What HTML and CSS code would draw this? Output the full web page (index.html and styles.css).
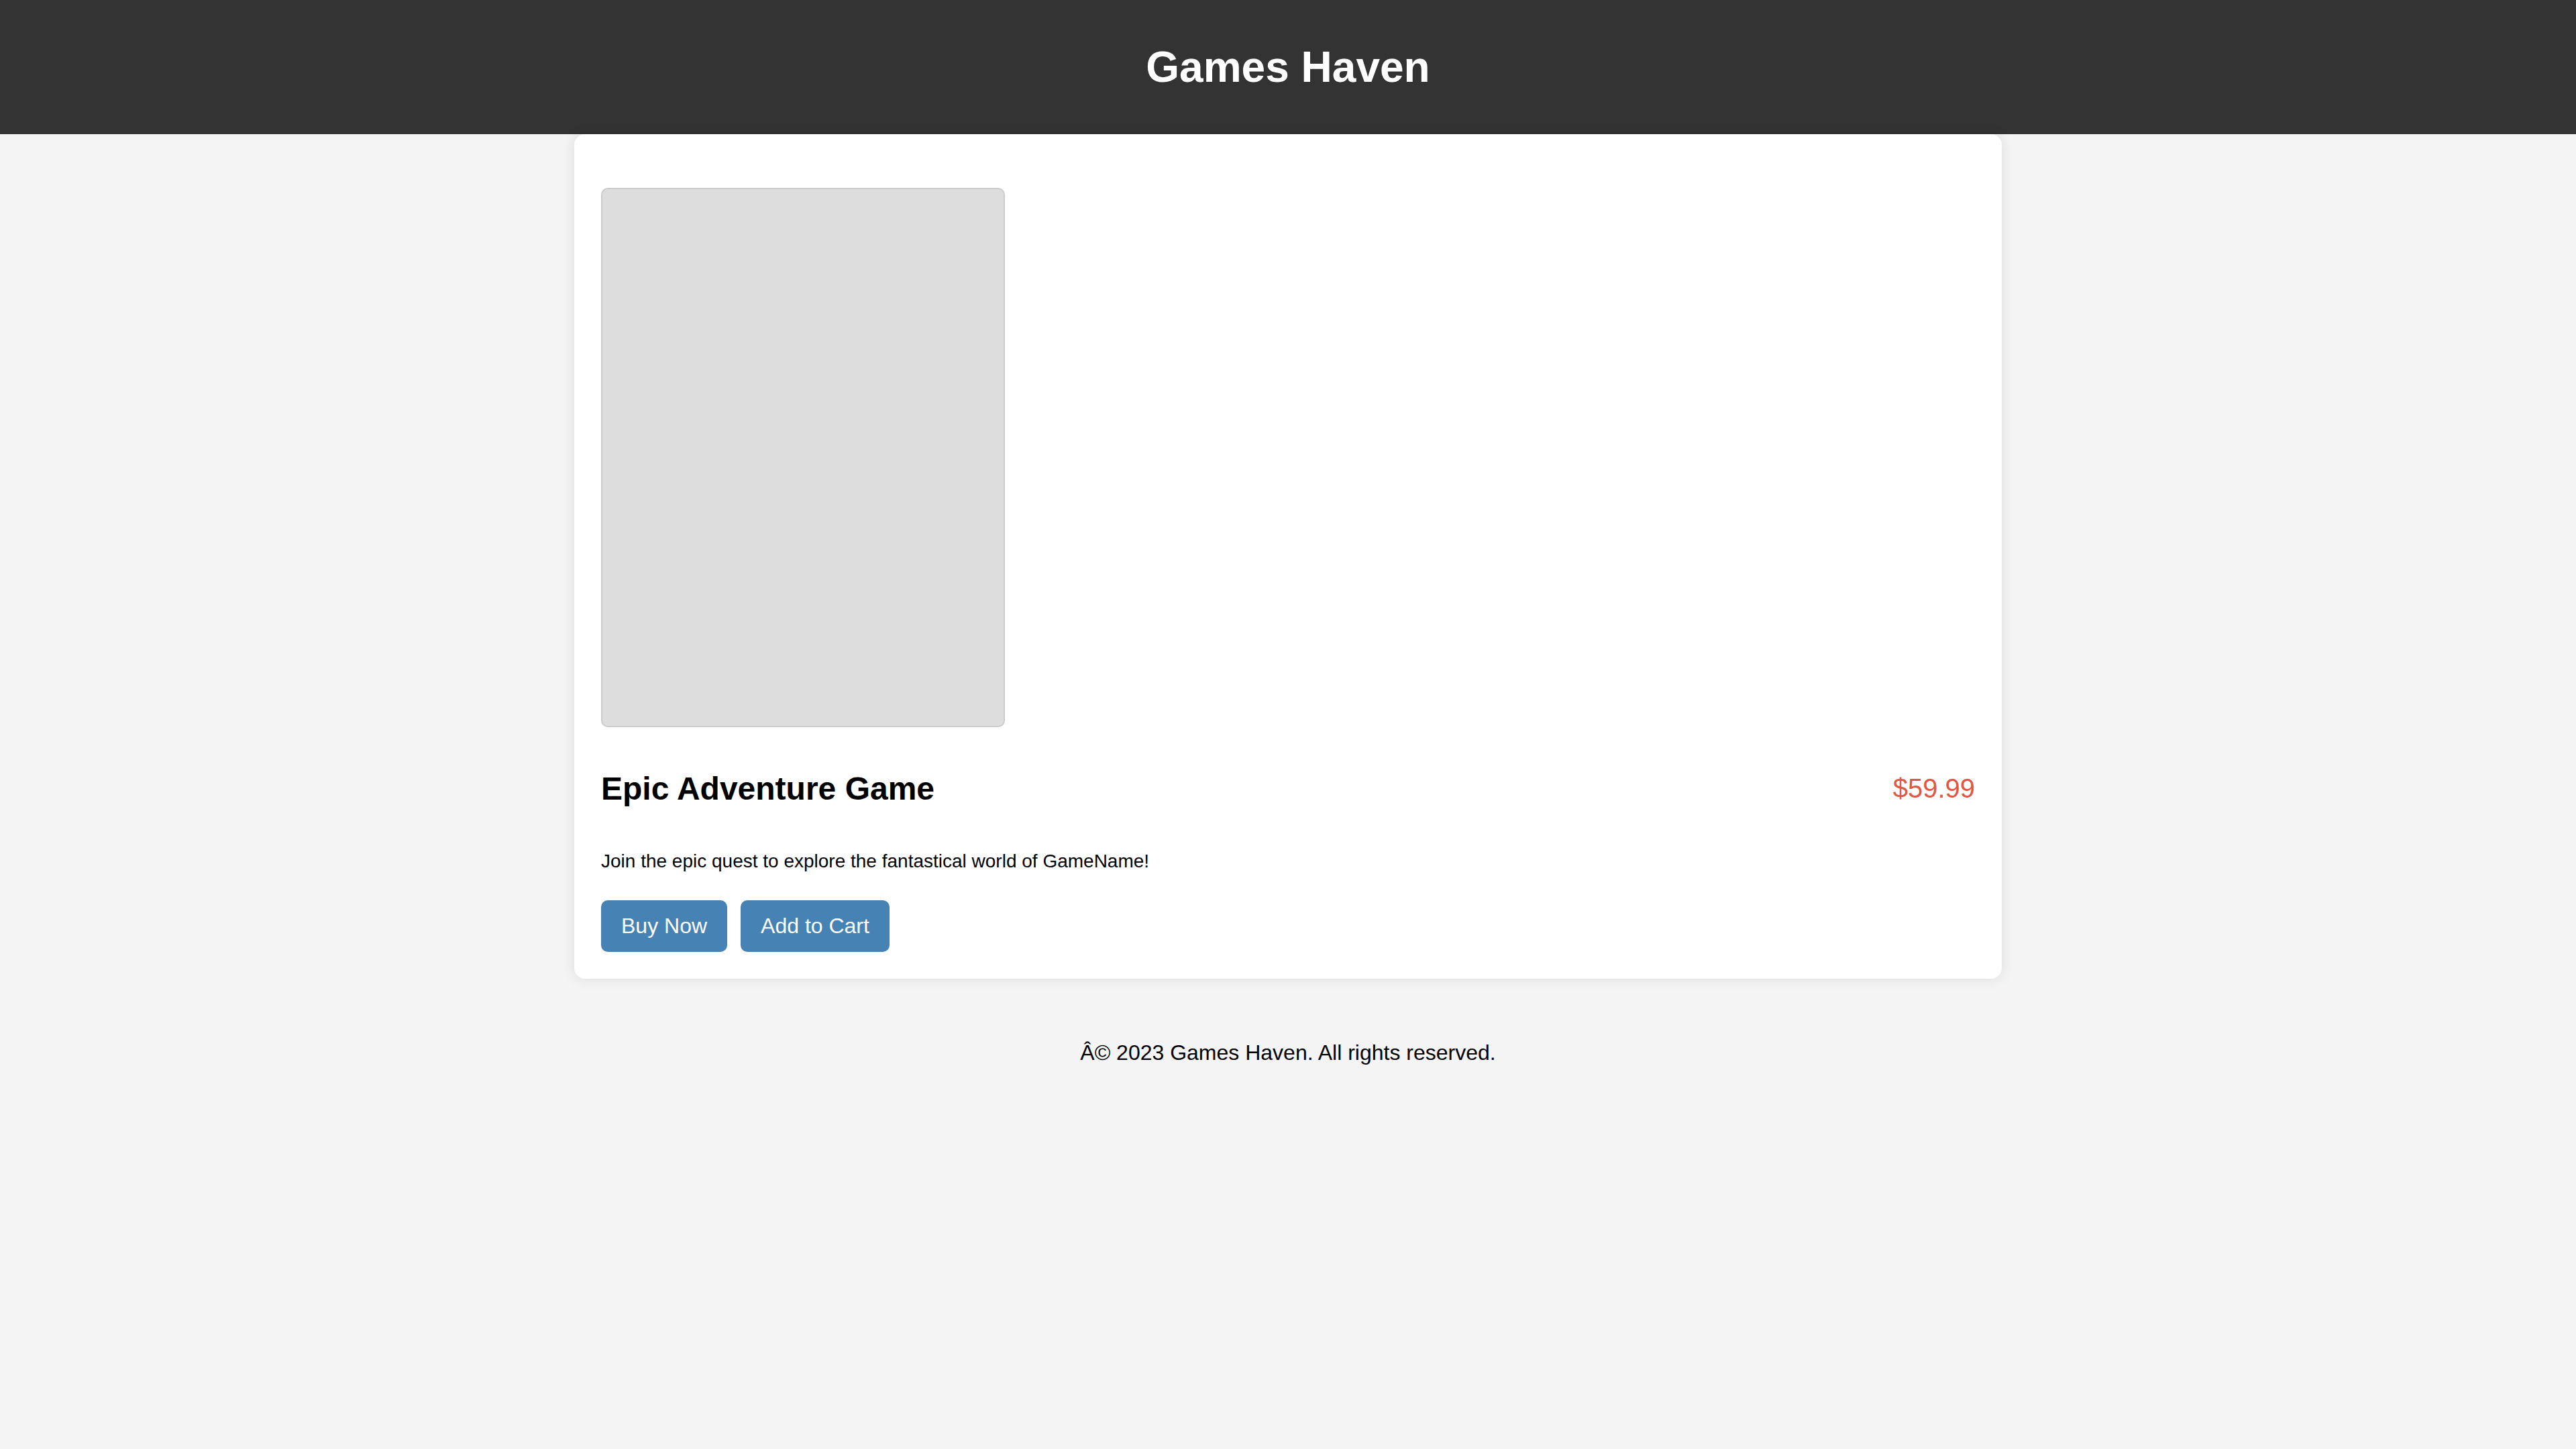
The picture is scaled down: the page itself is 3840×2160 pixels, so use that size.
FILE: index.html
```html
<!DOCTYPE html>
<html lang="en">
<head>
<meta charset="utf-8">
<title>Games Haven</title>
<link rel="stylesheet" href="styles.css">
</head>
<body>
<header class="site-header">
  <h1 class="site-title">Games Haven</h1>
</header>
<main class="container">
  <div class="product-card">
    <div class="product-image"></div>
    <div class="product-head">
      <h2 class="product-title">Epic Adventure Game</h2>
      <span class="product-price">$59.99</span>
    </div>
    <p class="product-desc">Join the epic quest to explore the fantastical world of GameName!</p>
    <div class="actions">
      <button class="btn">Buy Now</button>
      <button class="btn">Add to Cart</button>
    </div>
  </div>
</main>
<footer class="site-footer">
  <p class="copyright">Â© 2023 Games Haven. All rights reserved.</p>
</footer>
</body>
</html>
```
FILE: styles.css
```css
* { box-sizing: border-box; }
html, body { margin: 0; padding: 0; }
body {
  background: #f4f4f4;
  font-family: "Liberation Sans", Arial, sans-serif;
  font-size: 32px;
  color: #000;
}
.site-header {
  background: #333;
  color: #fff;
  text-align: center;
  padding: 20px 0;
}
.site-title {
  margin: 42.88px 0;
  font-size: 64px;
  font-weight: bold;
  line-height: normal;
}
.container {
  width: 2128px;
  margin: 0 auto;
}
.product-card {
  background: #fff;
  border-radius: 16px;
  box-shadow: 0 0 20px rgba(0, 0, 0, 0.1);
  padding: 40px;
}
.product-image {
  box-sizing: content-box;
  width: 598px;
  height: 800px;
  margin-top: 40px;
  background: #ddd;
  border: 2px solid #ccc;
  border-radius: 10px;
}
.product-head {
  display: flex;
  justify-content: space-between;
  align-items: center;
  margin-top: 64px;
}
.product-title {
  margin: 0;
  font-size: 48px;
  font-weight: bold;
  line-height: normal;
}
.product-price {
  font-size: 40px;
  color: #de5846;
}
.product-desc {
  font-size: 28px;
  margin: 65px 0 42px;
  line-height: normal;
}
.actions {
  display: flex;
  gap: 20px;
}
.btn {
  font-family: "Liberation Sans", Arial, sans-serif;
  font-size: 32px;
  line-height: normal;
  color: #fff;
  background: #4682b4;
  border: none;
  border-radius: 10px;
  padding: 20px 30px;
}
.site-footer {
  text-align: center;
  padding: 60px 0;
}
.copyright {
  margin: 32px 0;
  font-size: 32px;
}
```
